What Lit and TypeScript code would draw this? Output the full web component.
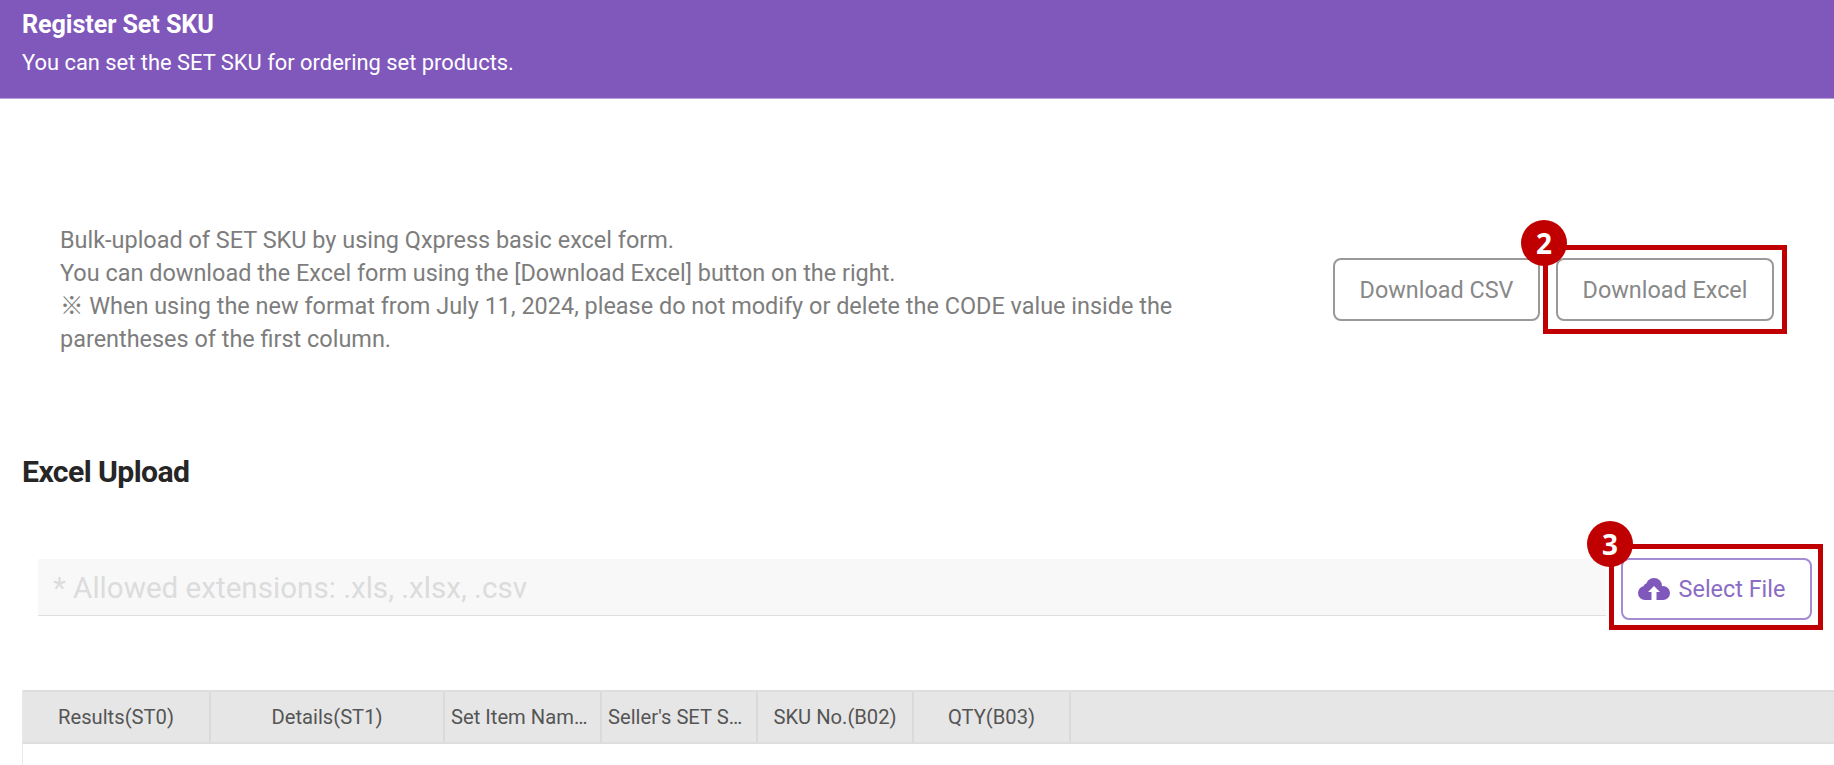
import { LitElement, html, css } from "lit";
import { customElement } from "lit/decorators.js";
import { classMap } from "lit/directives/class-map.js";

@customElement("app-root")
export class AppRoot extends LitElement {
  static styles = css`
    :host { display: block; width: 1834px; height: 765px; overflow: hidden; background: #fff; font-family: Roboto, "Noto Sans CJK KR", sans-serif; }
    .banner { box-sizing: border-box; height: 99px; background: #8058bb; border-bottom: 1px solid #b9a2dc; padding: 10px 22px 0; color: #fff; }
    .banner h1 { margin: 0; font-size: 25.2px; line-height: 30px; font-weight: 700; letter-spacing: -0.1px; }
    .banner p { margin: 8px 0 0; font-size: 21.9px; line-height: 30px; font-weight: 400; }
    .intro { display: flex; justify-content: space-between; align-items: flex-start; padding: 124px 60px 0; }
    .intro-text { margin: 1px 0 0; width: 1130px; font-size: 23.45px; line-height: 33px; color: #7d7d7d; }
    .actions { display: flex; gap: 16px; margin: 35px 0 0; }
    .btn { position: relative; box-sizing: border-box; height: 63px; border: 2px solid #999; border-radius: 8px; background: #fff; color: #888; font: 400 23.4px Roboto, sans-serif; display: flex; align-items: center; justify-content: center; }
    .csv { width: 207px; }
    .excel { width: 218px; }
    .mark { position: absolute; box-sizing: border-box; border: 5px solid #c00000; pointer-events: none; }
    .excel .mark { inset: -15.5px -15px -14.5px -15px; }
    .select .mark { inset: -16px -13px -11.5px -14px; }
    .badge { position: absolute; width: 46px; height: 46px; border-radius: 50%; background: #c00000; color: #fff; font: 700 28px/46px "Open Sans", sans-serif; text-align: center; z-index: 1; }
    .excel .badge { left: -37px; top: -40px; }
    .select .badge { left: -36px; top: -39px; }
    h2 { margin: 0; padding: 0 22px; font-size: 30.2px; line-height: 36px; font-weight: 700; letter-spacing: -0.6px; color: #262626; }
    .section { margin-top: 98px; }
    .upload { display: flex; align-items: flex-start; margin-top: 68px; padding: 0 22px 0 38px; }
    .field { box-sizing: border-box; width: 1568px; height: 57px; margin-top: 1px; background: #f8f8f8; border-bottom: 1.5px solid #dedede; padding: 2px 0 0 15px; display: flex; align-items: center; font-size: 29.6px; color: #dcdcdc; }
    .select { box-sizing: border-box; width: 191px; height: 62px; margin-left: 15px; padding: 0 10px 0 0; border: 2px solid #a48cd2; border-radius: 8px; color: #8a6cc4; background: #fff; font: 400 23.4px Roboto, sans-serif; display: flex; align-items: center; justify-content: center; gap: 9px; position: relative; }
    .select svg { width: 32px; height: 22px; flex: none; }
    .cloud { fill: #8058bb; }
    .arrow { fill: #fff; }
    .table { margin: 70px 0 0 22px; border-left: 1px solid #e8e8e8; height: 80px; }
    .thead { display: flex; height: 54px; box-sizing: border-box; background: #e6e6e6; border-top: 2px solid #dedede; border-bottom: 2px solid #dedede; }
    .th { box-sizing: border-box; border-right: 2px solid #dadada; display: flex; align-items: center; justify-content: center; font-size: 20.2px; color: #555; white-space: nowrap; }
    .th.trunc { justify-content: flex-start; padding-left: 6px; }
  `;

  render() {
    const cols: [string, number, boolean][] = [
      ["Results(ST0)", 188, false],
      ["Details(ST1)", 234, false],
      ["Set Item Nam…", 157, true],
      ["Seller's SET S…", 156, true],
      ["SKU No.(B02)", 156, false],
      ["QTY(B03)", 157, false],
    ];
    return html`
      <header class="banner">
        <h1>Register Set SKU</h1>
        <p>You can set the SET SKU for ordering set products.</p>
      </header>
      <section class="intro">
        <p class="intro-text">
          Bulk-upload of SET SKU by using Qxpress basic excel form.<br />
          You can download the Excel form using the [Download Excel] button on the right.<br />
          ※ When using the new format from July 11, 2024, please do not modify or delete the CODE value inside the parentheses of the first column.
        </p>
        <div class="actions">
          <button class="btn csv">Download CSV</button>
          <button class="btn excel">
            Download Excel
            <span class="mark"></span>
            <span class="badge">2</span>
          </button>
        </div>
      </section>
      <section class="section">
        <h2>Excel Upload</h2>
        <div class="upload">
          <div class="field">* Allowed extensions: .xls, .xlsx, .csv</div>
          <button class="select">
            <svg viewBox="0 0 32 22">
              <g class="cloud">
                <circle cx="16" cy="8" r="8"></circle>
                <circle cx="7" cy="15" r="7"></circle>
                <circle cx="25" cy="15" r="7"></circle>
                <circle cx="9.5" cy="9.5" r="4"></circle>
                <rect x="7" y="11" width="18" height="11"></rect>
              </g>
              <polygon class="arrow" points="16,8 22,14 18.5,14 18.5,22 13.5,22 13.5,14 10,14"></polygon>
            </svg>
            Select File
            <span class="mark"></span>
            <span class="badge">3</span>
          </button>
        </div>
        <div class="table">
          <div class="thead">
            ${cols.map(([t, w, trunc]) => html`<div class=${classMap({ th: true, trunc })} style="width:${w}px">${t}</div>`)}
          </div>
        </div>
      </section>
    `;
  }
}
